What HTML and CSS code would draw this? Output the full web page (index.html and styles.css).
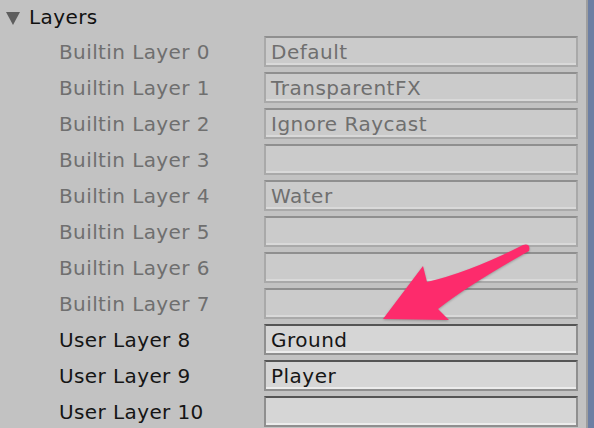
FILE: index.html
```html
<!DOCTYPE html>
<html>
<head>
<meta charset="utf-8">
<link rel="stylesheet" href="styles.css">
</head>
<body>
<div class="window">
  <div class="panel">
    <div class="header">
      <span class="tri"></span>
      <span class="title">Layers</span>
    </div>
    <div class="rows">
      <div class="row builtin"><span class="label">Builtin Layer 0</span><div class="field">Default</div></div>
      <div class="row builtin"><span class="label">Builtin Layer 1</span><div class="field">TransparentFX</div></div>
      <div class="row builtin"><span class="label">Builtin Layer 2</span><div class="field">Ignore Raycast</div></div>
      <div class="row builtin"><span class="label">Builtin Layer 3</span><div class="field"></div></div>
      <div class="row builtin"><span class="label">Builtin Layer 4</span><div class="field">Water</div></div>
      <div class="row builtin"><span class="label">Builtin Layer 5</span><div class="field"></div></div>
      <div class="row builtin"><span class="label">Builtin Layer 6</span><div class="field"></div></div>
      <div class="row builtin"><span class="label">Builtin Layer 7</span><div class="field"></div></div>
      <div class="row user"><span class="label">User Layer 8</span><div class="field">Ground</div></div>
      <div class="row user"><span class="label">User Layer 9</span><div class="field">Player</div></div>
      <div class="row user"><span class="label">User Layer 10</span><div class="field"></div></div>
    </div>
    <svg class="arrow" width="594" height="428" viewBox="0 0 594 428">
      <path d="M383,319 L423,266 L427,282 Q470,272 523,245 Q531,243 529,251 Q470,284 438,309 L449,320 Z" fill="#fd2b6c"/>
    </svg>
  </div>
  <div class="edge"></div>
</div>
</body>
</html>
```
FILE: styles.css
```css
html, body {
  margin: 0;
  padding: 0;
}
body {
  width: 594px;
  height: 428px;
  overflow: hidden;
  background: #c2c2c2;
  font-family: "DejaVu Sans", "Liberation Sans", sans-serif;
}
.window {
  display: flex;
  height: 428px;
}
.panel {
  flex: 1;
  position: relative;
  padding-right: 8px;
}
.header {
  height: 36px;
  display: flex;
  align-items: center;
  padding-left: 6px;
  box-sizing: border-box;
  padding-bottom: 2px;
}
.tri {
  width: 0;
  height: 0;
  border-left: 7px solid transparent;
  border-right: 7px solid transparent;
  border-top: 13px solid #5e5e5e;
  margin-right: 9px;
  margin-top: 2px;
}
.title {
  font-size: 20px;
  letter-spacing: 0.4px;
  color: #111;
}
.rows {
  display: flex;
  flex-direction: column;
}
.row {
  height: 36px;
  display: grid;
  grid-template-columns: 264px 314px;
  align-items: start;
}
.label {
  padding-left: 59px;
  font-size: 20px;
  letter-spacing: 0.4px;
  line-height: 33px;
  white-space: nowrap;
}
.field {
  height: 31px;
  box-sizing: border-box;
  border: 2px solid #a9a9a9;
  border-top-color: #8f8f8f;
  border-bottom-color: #a9a9a9;
  box-shadow: inset 0 -2px 0 #d9d9d9;
  background: #cbcbcb;
  padding-left: 5px;
  font-size: 20px;
  letter-spacing: 0.5px;
  line-height: 29px;
  white-space: nowrap;
}
.builtin .label, .builtin .field {
  color: #6f6f6f;
}
.user .label {
  color: #151515;
}
.user .field {
  color: #151515;
  background: #d6d6d6;
  border-color: #8f8f8f;
  border-top-color: #555;
  box-shadow: inset 0 -2px 0 #ececec;
}
.arrow {
  position: absolute;
  left: 0;
  top: 0;
  pointer-events: none;
  filter: drop-shadow(0 1px 1px rgba(0,0,0,0.25));
}
.edge {
  width: 8px;
  border-left: 2px solid #9e9e9e;
  box-sizing: border-box;
  background: #6c7fa3;
}
```
